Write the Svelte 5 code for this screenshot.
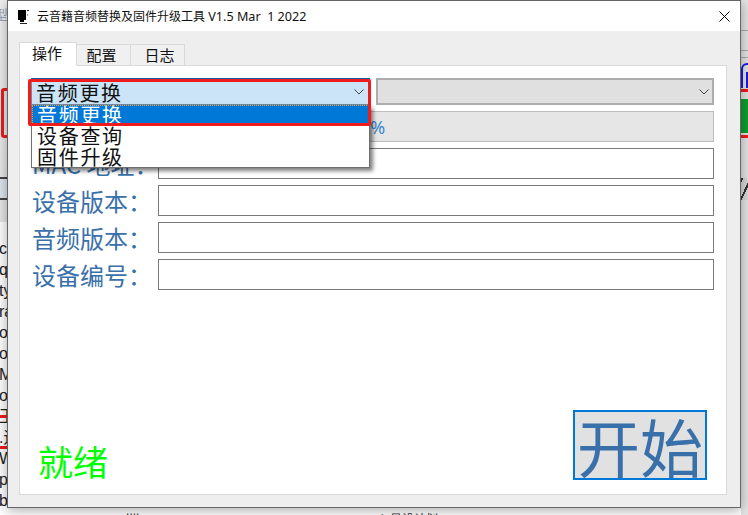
<script lang="ts">
    const fields = ["设备版本：", "音频版本：", "设备编号："];
    const modes = ["音频更换", "设备查询", "固件升级"];
    const behindLeft = ["cl", "q", "ty", "ra", "ot", "ot", "Mc", "o", "王", ".运", "WI", "p3", "b"];
    const version = " V1.5 Mar  1 2022";
</script>

<div class="desk">
    <!-- bits of the windows behind -->
    <div class="behind-left">
        <div class="faint">型</div>
        <div class="red-bracket"></div>
        <div class="dark-band"></div>
        <div class="line-list">
            {#each behindLeft as t}
                <div class="line-item">{t}</div>
            {/each}
        </div>
        <div class="red-line one"></div>
        <div class="red-line two"></div>
    </div>
    <div class="behind-right">
        <div class="gray-line l1"></div>
        <div class="gray-line l2"></div>
        <div class="gray-line l3"></div>
        <div class="blue-shape"></div>
        <div class="red-line r1"></div>
        <div class="green-block"></div>
        <div class="red-line r2"></div>
        <div class="hatch"></div>
    </div>
    <div class="behind-bottom">
        <span class="bottom-a">· · ···· ''''</span>
        <span class="bottom-b">入量设计划</span>
    </div>

    <div class="window">
        <header class="titlebar">
            <svg class="app-icon" width="13" height="15" viewBox="0 0 13 15" aria-hidden="true">
                <path d="M1 1h8v10H7v2H3v-2H1z" fill="#000" />
                <rect x="3" y="14" width="7" height="1" fill="#222" />
                <rect x="10" y="1" width="2" height="1" fill="#333" />
                <rect x="10" y="5" width="1" height="2" fill="#999" />
            </svg>
            <span class="title">云音籍音频替换及固件升级工具<span class="title-latin">{version}</span></span>
            <svg class="close" width="11" height="11" viewBox="0 0 11 11" aria-hidden="true">
                <path d="M.5.5l10 10M10.5.5l-10 10" stroke="#000" stroke-width="1" fill="none" />
            </svg>
        </header>

        <div class="body">
            <div class="tabs">
                <div class="tab active">操作</div>
                <div class="tab second">配置</div>
                <div class="tab third">日志</div>
            </div>

            <section class="panel">
                <div class="combos">
                    <div class="combo open">
                        <span>音频更换</span>
                        <svg class="chevron" width="10" height="6" viewBox="0 0 10 6" aria-hidden="true">
                            <path d="M.5.5L5 5 9.5.5" stroke="#444" fill="none" />
                        </svg>
                        <ul class="droplist">
                            {#each modes as m, i}
                                <li class:selected={i === 0}>{m}</li>
                            {/each}
                        </ul>
                        <div class="annotation"></div>
                    </div>
                    <div class="combo disabled">
                        <svg class="chevron" width="10" height="6" viewBox="0 0 10 6" aria-hidden="true">
                            <path d="M.5.5L5 5 9.5.5" stroke="#444" fill="none" />
                        </svg>
                    </div>
                </div>

                <div class="progress">0%</div>

                <div class="field">
                    <span class="label">MAC 地址：</span>
                    <div class="input"></div>
                </div>
                {#each fields as f}
                    <div class="field">
                        <span class="label">{f}</span>
                        <div class="input"></div>
                    </div>
                {/each}

                <div class="footer">
                    <span class="status">就绪</span>
                    <button class="start" type="button">开始</button>
                </div>
            </section>
        </div>
    </div>
</div>

<style>
    :global(body) {
        margin: 0;
        background: #fff;
    }

    .desk {
        position: relative;
        width: 748px;
        height: 515px;
        overflow: hidden;
        background: #fff;
        font-family: "Noto Sans CJK SC", "Noto Sans", sans-serif;
    }

    .behind-left {
        position: absolute;
        left: 0;
        top: 0;
        width: 8px;
        height: 515px;
        overflow: hidden;
        background: linear-gradient(#f0f0f0 0, #e6e6e6 222px, #fff 222px);
    }

    .faint {
        position: absolute;
        left: -6px;
        top: 4px;
        font-size: 14px;
        line-height: 20px;
        color: #9aa8b8;
    }

    .red-bracket {
        position: absolute;
        left: 1px;
        top: 88px;
        width: 30px;
        height: 44px;
        border: 3px solid #f01c1c;
        border-radius: 3px;
    }

    .dark-band {
        position: absolute;
        left: 0;
        top: 177px;
        width: 8px;
        height: 19px;
        border-top: 2px solid #444;
        border-bottom: 2px solid #444;
        background: #dfe6ee;
    }

    .line-list {
        position: absolute;
        left: -1px;
        top: 238px;
        font-family: "Liberation Sans", "Noto Sans CJK SC", sans-serif;
        font-size: 16px;
        color: #222;
    }

    .line-item {
        height: 21px;
        line-height: 21px;
        white-space: nowrap;
    }

    .red-line {
        position: absolute;
        background: #f01c1c;
        height: 3px;
        left: 0;
        right: 0;
    }

    .red-line.one {
        top: 415px;
    }

    .red-line.two {
        top: 446px;
    }

    .behind-right {
        position: absolute;
        left: 741px;
        top: 0;
        width: 7px;
        height: 515px;
        overflow: hidden;
        background: #e4e4e4;
    }

    .gray-line {
        position: absolute;
        left: 0;
        right: 0;
        height: 1px;
        background: #aaa;
    }

    .l1 {
        top: 30px;
    }

    .l2 {
        top: 50px;
    }

    .l3 {
        top: 57px;
    }

    .blue-shape {
        position: absolute;
        left: 0;
        top: 63px;
        width: 12px;
        height: 25px;
        box-sizing: border-box;
        border: 2px solid #1a1ae0;
        border-bottom: none;
        border-radius: 6px 6px 0 0;
        background: linear-gradient(#1a1ae0, #1a1ae0) 3px 7px / 2px 18px no-repeat;
    }

    .r1 {
        top: 89px;
    }

    .green-block {
        position: absolute;
        left: 0;
        right: 0;
        top: 99px;
        height: 34px;
        background: #0d9e2d;
    }

    .r2 {
        top: 135px;
    }

    .hatch {
        position: absolute;
        left: 0;
        right: 0;
        top: 178px;
        height: 22px;
        background: repeating-linear-gradient(115deg, #333 0 2px, #d8d8d8 2px 8px);
    }

    .behind-bottom {
        position: absolute;
        left: 0;
        right: 0;
        top: 508px;
        height: 7px;
        overflow: hidden;
        font-size: 12px;
        line-height: 16px;
        color: #333;
    }

    .bottom-a {
        position: absolute;
        left: 46px;
        top: 2px;
    }

    .bottom-b {
        position: absolute;
        left: 378px;
        top: 3px;
    }

    .window {
        position: absolute;
        left: 7px;
        top: 0;
        width: 734px;
        height: 508px;
        box-sizing: border-box;
        border: 1px solid #666;
        display: flex;
        flex-direction: column;
        background: #eee;
        box-shadow: 0 2px 12px rgb(0 0 0 / 0.35);
    }

    .titlebar {
        height: 30px;
        flex: none;
        background: #fff;
        display: flex;
        align-items: center;
        padding-left: 9px;
        font-size: 12px;
        color: #111;
    }

    .app-icon {
        margin-right: 7px;
        flex: none;
    }

    .title {
        white-space: pre;
        font-family: "Noto Sans CJK SC", "Noto Sans", sans-serif;
    }

    .title-latin {
        font-family: "Noto Sans", sans-serif;
        font-size: 12.6px;
    }

    .close {
        margin-left: auto;
        margin-right: 10px;
    }

    .body {
        flex: 1;
        display: flex;
        flex-direction: column;
        min-height: 0;
        padding: 11px 13px 12px 11px;
    }

    .tabs {
        display: flex;
        align-items: flex-end;
        height: 24px;
        margin-bottom: -1px;
        position: relative;
        z-index: 1;
    }

    .tab {
        box-sizing: border-box;
        width: 54px;
        height: 22px;
        background: #f0f0f0;
        border: 1px solid #d9d9d9;
        border-left: none;
        text-align: center;
        font-size: 15px;
        line-height: 20px;
        color: #111;
    }

    .tab.second {
        padding-right: 4px;
    }

    .tab.third {
        padding-left: 4px;
    }

    .tab.active {
        width: 58px;
        height: 24px;
        padding-right: 2px;
        background: #fff;
        border-left: 1px solid #d9d9d9;
        border-bottom-color: #fff;
    }

    .panel {
        flex: 1;
        box-sizing: border-box;
        background: #fff;
        border: 1px solid #d9d9d9;
        padding: 12px 12px 13px 11px;
        display: flex;
        flex-direction: column;
        gap: 6px;
    }

    .combos {
        display: grid;
        grid-template-columns: 339px 338px;
        gap: 6px;
        position: relative;
        z-index: 2;
    }

    .combo {
        position: relative;
        box-sizing: border-box;
        height: 27px;
        display: flex;
        align-items: center;
        font-size: 20px;
        letter-spacing: 1.7px;
        color: #111;
        padding-left: 4px;
    }

    .combo.open {
        background: #cce4f7;
        border: 1px solid #7a8a9a;
        border-top: 2px solid #0a5aa8;
    }

    .combo.disabled {
        background: #e0e0e0;
        border: 2px solid #adadad;
    }

    .chevron {
        position: absolute;
        right: 5px;
        top: 9px;
    }

    .combo.disabled .chevron {
        right: 3px;
    }

    .droplist {
        position: absolute;
        left: -1px;
        right: -1px;
        top: 25px;
        margin: 0;
        padding: 0;
        list-style: none;
        background: #fff;
        border: 1px solid #6f6f6f;
        border-top: none;
        box-shadow: 3px 3px 4px rgb(0 0 0 / 0.5);
    }

    .droplist li {
        height: 21px;
        line-height: 21px;
        padding-left: 5px;
        color: #111;
    }

    .droplist li.selected {
        height: 20px;
        line-height: 20px;
        background: #0078d7;
        color: #fff;
        outline: 1px dotted #e8a050;
        outline-offset: -1px;
    }

    .annotation {
        position: absolute;
        left: -4px;
        right: -2px;
        top: -1px;
        height: 47px;
        box-sizing: border-box;
        border: 3px solid #f01c1c;
        border-radius: 2px;
        pointer-events: none;
    }

    .progress {
        box-sizing: border-box;
        height: 31px;
        background: #e6e6e6;
        border: 1px solid #bcbcbc;
        text-align: center;
        font-family: "Noto Sans", sans-serif;
        font-size: 18px;
        line-height: 30px;
        color: #3a86d0;
    }

    .field {
        display: flex;
        align-items: center;
        height: 31px;
    }

    .label {
        flex: none;
        box-sizing: border-box;
        width: 127px;
        padding-left: 1px;
        font-size: 24px;
        white-space: nowrap;
        color: #3a70aa;
    }

    .input {
        flex: 1;
        height: 31px;
        box-sizing: border-box;
        background: #fff;
        border: 1px solid #7a7a7a;
    }

    .footer {
        margin-top: auto;
        display: flex;
        justify-content: space-between;
        align-items: flex-end;
        padding-left: 7px;
    }

    .status {
        font-size: 35px;
        line-height: 40px;
        color: #00ff00;
    }

    .start {
        box-sizing: border-box;
        width: 134px;
        height: 70px;
        margin-right: 7px;
        margin-bottom: 1px;
        padding: 0;
        background: #e1e1e1;
        border: 2px solid #0078d7;
        font-family: inherit;
        font-size: 63px;
        line-height: 60px;
        color: #3a70aa;
    }
</style>
